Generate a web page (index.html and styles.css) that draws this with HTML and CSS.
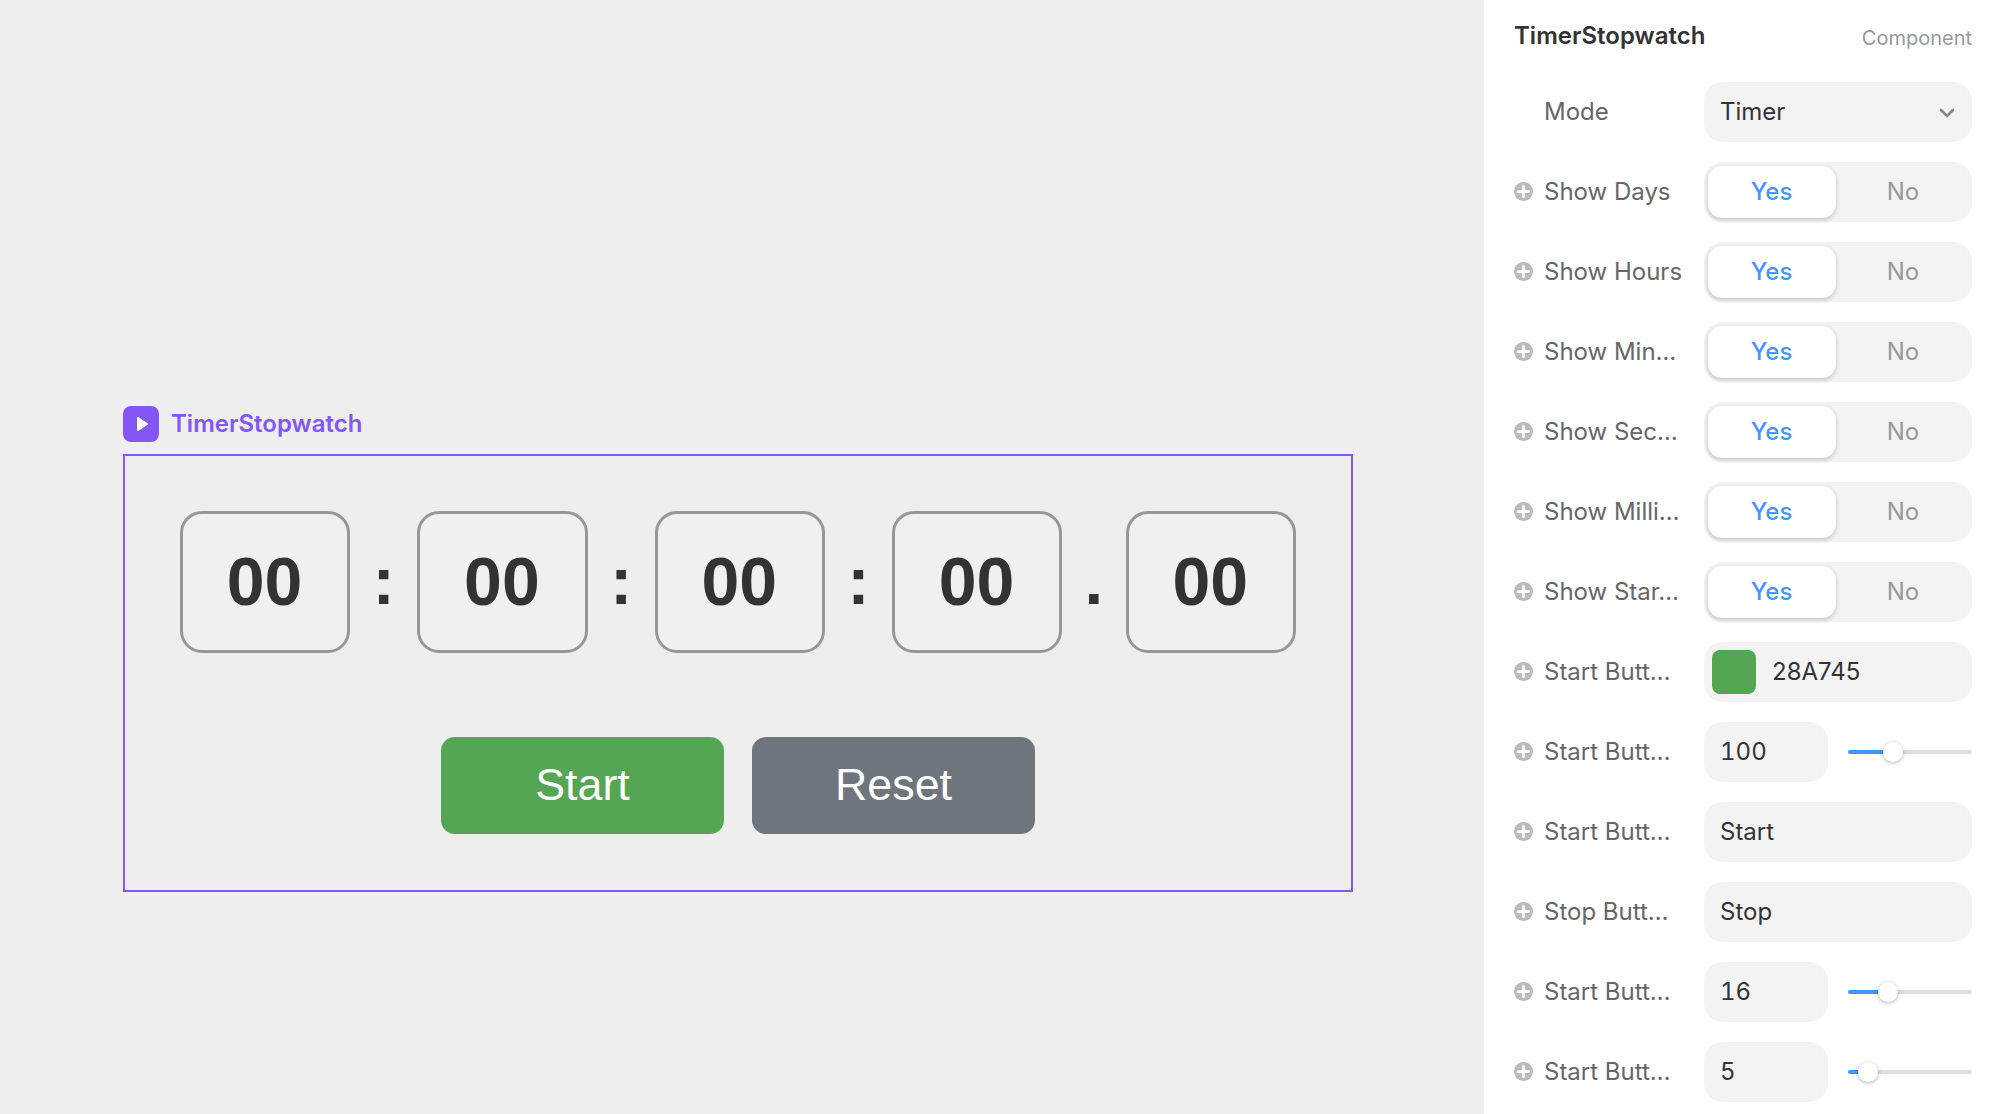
FILE: index.html
```html
<!DOCTYPE html>
<html lang="en">
<head>
<meta charset="utf-8">
<title>TimerStopwatch</title>
<link rel="stylesheet" href="styles.css">
</head>
<body>
<div class="app">
  <main class="canvas">
    <div class="tag">
      <span class="tag-icon"><svg width="14" height="16" viewBox="0 0 14 16"><path d="M3 2 L12 8 L3 14 Z" fill="#fff" stroke="#fff" stroke-width="2" stroke-linejoin="round"/></svg></span>
      <span class="tag-name">TimerStopwatch</span>
    </div>
    <section class="frame">
      <div class="clock">
        <div class="cell">00</div><span class="sep">:</span>
        <div class="cell">00</div><span class="sep">:</span>
        <div class="cell">00</div><span class="sep">:</span>
        <div class="cell">00</div><span class="sep">.</span>
        <div class="cell">00</div>
      </div>
      <div class="actions">
        <button class="action start">Start</button>
        <button class="action reset">Reset</button>
      </div>
    </section>
  </main>
  <aside class="panel">
    <header class="panel-head"><h1 class="panel-title">TimerStopwatch</h1><span class="panel-kind">Component</span></header>
    <div class="row"><span class="plus-slot"></span><span class="label">Mode</span>
      <div class="control select"><span>Timer</span><svg class="chev" width="16" height="10" viewBox="0 0 16 10"><path d="M2 2 L8 8 L14 2" fill="none" stroke="#888" stroke-width="2.6" stroke-linecap="round" stroke-linejoin="round"/></svg></div></div>
    <div class="row"><svg class="plus" viewBox="0 0 19 19"><circle cx="9.5" cy="9.5" r="9.5"/><path d="M9.5 4.5v10M4.5 9.5h10"/></svg><span class="label">Show Days</span>
      <div class="control seg"><span class="seg-on">Yes</span><span class="seg-off">No</span></div></div>
    <div class="row"><svg class="plus" viewBox="0 0 19 19"><circle cx="9.5" cy="9.5" r="9.5"/><path d="M9.5 4.5v10M4.5 9.5h10"/></svg><span class="label">Show Hours</span>
      <div class="control seg"><span class="seg-on">Yes</span><span class="seg-off">No</span></div></div>
    <div class="row"><svg class="plus" viewBox="0 0 19 19"><circle cx="9.5" cy="9.5" r="9.5"/><path d="M9.5 4.5v10M4.5 9.5h10"/></svg><span class="label">Show Min…</span>
      <div class="control seg"><span class="seg-on">Yes</span><span class="seg-off">No</span></div></div>
    <div class="row"><svg class="plus" viewBox="0 0 19 19"><circle cx="9.5" cy="9.5" r="9.5"/><path d="M9.5 4.5v10M4.5 9.5h10"/></svg><span class="label">Show Sec…</span>
      <div class="control seg"><span class="seg-on">Yes</span><span class="seg-off">No</span></div></div>
    <div class="row"><svg class="plus" viewBox="0 0 19 19"><circle cx="9.5" cy="9.5" r="9.5"/><path d="M9.5 4.5v10M4.5 9.5h10"/></svg><span class="label">Show Milli…</span>
      <div class="control seg"><span class="seg-on">Yes</span><span class="seg-off">No</span></div></div>
    <div class="row"><svg class="plus" viewBox="0 0 19 19"><circle cx="9.5" cy="9.5" r="9.5"/><path d="M9.5 4.5v10M4.5 9.5h10"/></svg><span class="label">Show Star…</span>
      <div class="control seg"><span class="seg-on">Yes</span><span class="seg-off">No</span></div></div>
    <div class="row"><svg class="plus" viewBox="0 0 19 19"><circle cx="9.5" cy="9.5" r="9.5"/><path d="M9.5 4.5v10M4.5 9.5h10"/></svg><span class="label">Start Butt…</span>
      <div class="control color"><span class="swatch"></span><span class="hex">28A745</span></div></div>
    <div class="row"><svg class="plus" viewBox="0 0 19 19"><circle cx="9.5" cy="9.5" r="9.5"/><path d="M9.5 4.5v10M4.5 9.5h10"/></svg><span class="label">Start Butt…</span>
      <div class="num-wrap"><div class="control num">100</div><div class="slider"><span class="fill" style="width:45px"></span><span class="knob"></span><span class="rest"></span></div></div></div>
    <div class="row"><svg class="plus" viewBox="0 0 19 19"><circle cx="9.5" cy="9.5" r="9.5"/><path d="M9.5 4.5v10M4.5 9.5h10"/></svg><span class="label">Start Butt…</span>
      <div class="control">Start</div></div>
    <div class="row"><svg class="plus" viewBox="0 0 19 19"><circle cx="9.5" cy="9.5" r="9.5"/><path d="M9.5 4.5v10M4.5 9.5h10"/></svg><span class="label">Stop Butt…</span>
      <div class="control">Stop</div></div>
    <div class="row"><svg class="plus" viewBox="0 0 19 19"><circle cx="9.5" cy="9.5" r="9.5"/><path d="M9.5 4.5v10M4.5 9.5h10"/></svg><span class="label">Start Butt…</span>
      <div class="num-wrap"><div class="control num">16</div><div class="slider"><span class="fill" style="width:40px"></span><span class="knob"></span><span class="rest"></span></div></div></div>
    <div class="row"><svg class="plus" viewBox="0 0 19 19"><circle cx="9.5" cy="9.5" r="9.5"/><path d="M9.5 4.5v10M4.5 9.5h10"/></svg><span class="label">Start Butt…</span>
      <div class="num-wrap"><div class="control num">5</div><div class="slider"><span class="fill" style="width:20px"></span><span class="knob"></span><span class="rest"></span></div></div></div>
  </aside>
</div>
</body>
</html>
```
FILE: styles.css
```css
* { box-sizing: border-box; }
html, body { margin: 0; height: 100%; overflow: hidden; }
body { font-family: Inter, "Liberation Sans", sans-serif; background: #eeeeee; }
.app { display: flex; height: 1114px; }

.canvas { width: 1484px; flex: none; padding: 405px 0 0 123px; }
.tag { display: flex; align-items: center; gap: 12px; height: 37px; margin-bottom: 12px; }
.tag-icon { width: 36px; height: 36px; border-radius: 8px; background: #8257f6; display: flex; align-items: center; justify-content: center; padding-left: 2px; }
.tag-name { font-size: 24px; font-weight: 600; color: #8257f6; }

.frame { width: 1230px; height: 438px; border: 2px solid #8257f6; padding: 55px 0 0 55px; font-family: "Liberation Sans", Arial, sans-serif; }
.clock { display: flex; align-items: center; }
.cell { width: 170.2px; height: 142px; border: 3px solid #999696; border-radius: 22px; background: #f0f0f0; color: #333; font-size: 68px; font-weight: 700; padding: 0 1px 3px 0; display: flex; align-items: center; justify-content: center; }
.sep { margin: 0 22.4px; color: #333; font-size: 67.2px; font-weight: 700; line-height: 1; padding-bottom: 2px; }
.actions { display: flex; gap: 28px; margin: 84px 0 0 261px; }
.action { width: 283px; height: 97px; border: 0; border-radius: 14px; color: #fff; font: 400 44.8px "Liberation Sans", Arial, sans-serif; padding: 0 0 2px; }
.start { background: #54a653; }
.reset { background: #6e757d; }

.panel { width: 514px; flex: none; background: #fff; padding: 0 26px 0 30px; }
.panel-head { height: 72px; margin-bottom: 10px; display: flex; align-items: center; justify-content: space-between; }
.panel-title { margin: 0; font-size: 24px; font-weight: 600; color: #333; padding-bottom: 2px; }
.panel-kind { font-size: 20px; color: #999; padding-top: 4px; }

.row { display: flex; align-items: center; height: 60px; margin-bottom: 20px; }
.plus, .plus-slot { width: 19px; height: 19px; flex: none; margin: -1px 11px 0 0; }
.plus circle { fill: #bbb; }
.plus path { stroke: #fff; stroke-width: 3; stroke-linecap: round; fill: none; }
.label { width: 160px; flex: none; font-size: 24px; color: #666; white-space: nowrap; padding-bottom: 2px; }

.control { height: 60px; width: 268px; flex: none; border-radius: 19px; background: #f3f3f3; padding: 0 16px 2px; display: flex; align-items: center; font-size: 24px; color: #333; }
.select { justify-content: space-between; padding-right: 17px; }
.chev { margin-top: 3px; }
.seg { padding: 4px; }
.seg-on { width: 128px; height: 52px; border-radius: 14px; background: #fff; color: #4096ff; font-weight: 500; padding: 0 1px 2px 0; box-shadow: 0 2px 5px rgba(0,0,0,.2); display: flex; align-items: center; justify-content: center; }
.seg-off { flex: 1; color: #999; text-align: center; padding: 0 0 2px 2px; }
.color { padding: 0 0 0 8px; gap: 16px; }
.hex { padding-bottom: 2px; }
.swatch { width: 44px; height: 44px; border-radius: 8px; background: #54a653; }
.num-wrap { display: flex; align-items: center; width: 268px; flex: none; }
.num { width: 124px; font-variant-numeric: tabular-nums; }
.slider { display: flex; align-items: center; width: 124px; margin-left: 20px; }
.fill { height: 4px; background: #4096ff; border-radius: 2px 0 0 2px; flex: none; }
.rest { flex: 1; height: 4px; background: #ddd; border-radius: 0 2px 2px 0; }
.knob { width: 20px; height: 20px; flex: none; margin: 0 -10px; border-radius: 50%; background: #fff; box-shadow: 0 1px 4px rgba(0,0,0,.3); position: relative; }
```
